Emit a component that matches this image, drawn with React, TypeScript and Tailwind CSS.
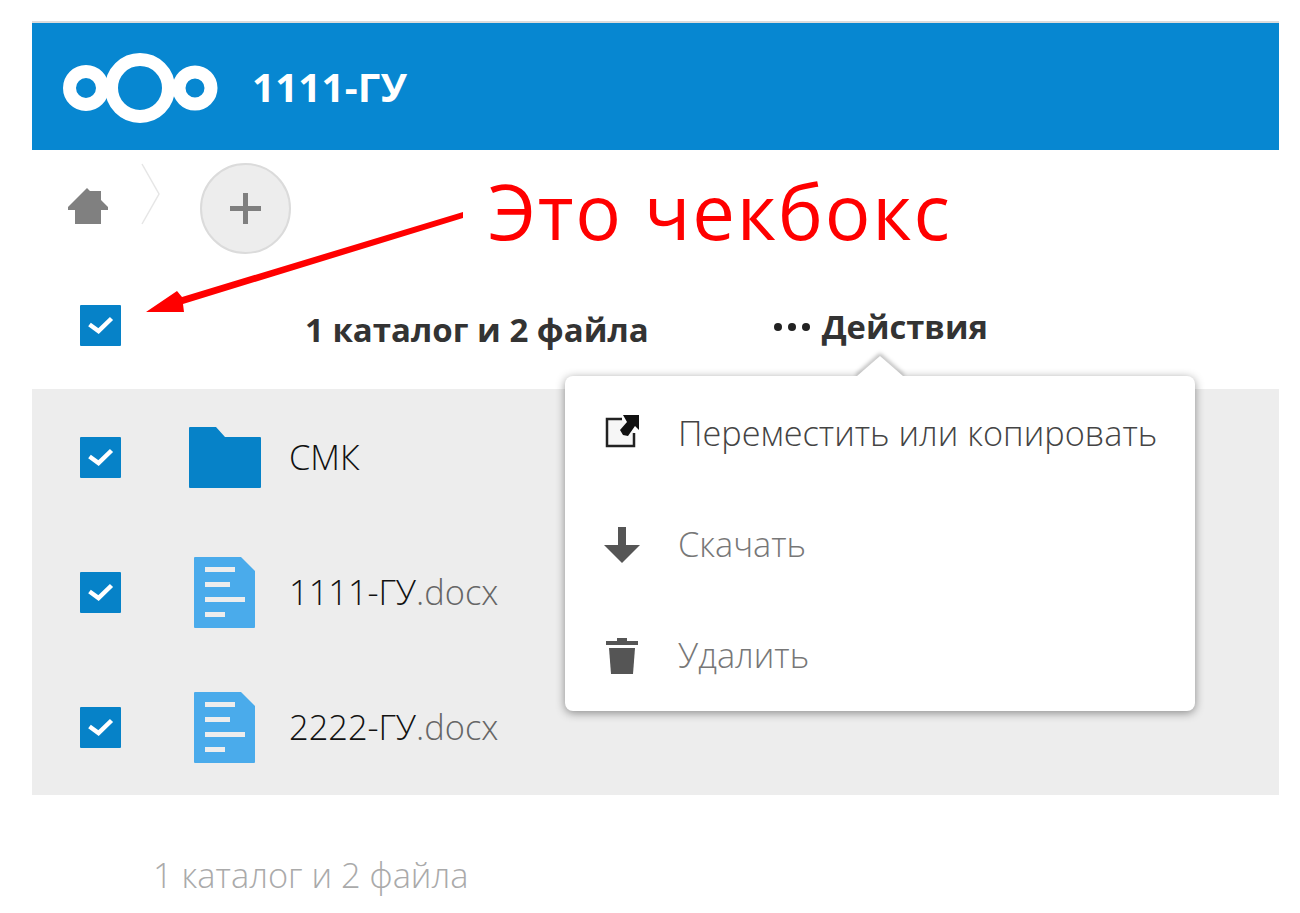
import React from "react";

const fontStack = { fontFamily: '"Open Sans", "Noto Sans", sans-serif' };

function Logo() {
  return (
    <svg width="156" height="76" viewBox="0 0 156 76" className="ml-[1px] mt-[2px] shrink-0">
      <circle cx="23" cy="38" r="16.5" fill="none" stroke="#fff" strokeWidth="13" />
      <circle cx="77" cy="38" r="28.5" fill="none" stroke="#fff" strokeWidth="13" />
      <circle cx="132" cy="38" r="16" fill="none" stroke="#fff" strokeWidth="13" />
    </svg>
  );
}

function Check() {
  return (
    <div className="h-[41px] w-[41px] shrink-0 rounded-[1px] bg-[#0682c8]">
      <svg width="41" height="41" viewBox="0 0 41 41">
        <path d="M9.5 19.5 L18.5 26 L31.5 13.5" fill="none" stroke="#fff" strokeWidth="4.5" />
      </svg>
    </div>
  );
}

function FolderIcon() {
  return (
    <svg width="72" height="61" viewBox="0 0 72 61" className="shrink-0">
      <path d="M0 1 Q0 0 1 0 H27 L36 10 H71 Q72 10 72 11 V60 Q72 61 71 61 H1 Q0 61 0 60 Z" fill="#0682c8" />
    </svg>
  );
}

function DocIcon() {
  return (
    <svg width="61" height="71" viewBox="0 0 61 71" className="-ml-[2px] shrink-0">
      <path d="M0 1 Q0 0 1 0 H47 L61 14 V70 Q61 71 60 71 H1 Q0 71 0 70 Z" fill="#4aabeb" />
      <rect x="11" y="10" width="30" height="5" fill="#ededed" />
      <rect x="11" y="25" width="25" height="5" fill="#ededed" />
      <rect x="11" y="40" width="40" height="5" fill="#ededed" />
      <rect x="11" y="55" width="20" height="5" fill="#ededed" />
    </svg>
  );
}

function FileRow({ name, ext, folder }: { name: string; ext?: string; folder?: boolean }) {
  return (
    <div className="flex h-[135px] items-center pl-[48px] last:h-[134px]">
      <Check />
      <div className="flex w-[168px] shrink-0 justify-center pl-[40px]">
        {folder ? <FolderIcon /> : <DocIcon />}
      </div>
      <span className="text-[34.4px] font-light leading-none text-[#111]">
        {name}
        {ext && <span className="text-[#666]">{ext}</span>}
      </span>
    </div>
  );
}

function MenuItem({ icon, label, color }: { icon: React.ReactNode; label: string; color: string }) {
  return (
    <div className="flex h-[111px] items-center pl-[38px]">
      <div className="flex w-[38px] shrink-0 justify-center">{icon}</div>
      <span className={`ml-[37px] text-[34.3px] font-light leading-none ${color}`}>{label}</span>
    </div>
  );
}

export default function App() {
  return (
    <div className="relative h-[913px] w-[1300px] overflow-hidden bg-white" style={fontStack}>
      <div className="ml-[32px] mr-[21px] pt-[21px]">
        <div className="h-[2px] bg-[#dcdcdc]" />
        {/* Header */}
        <div className="flex h-[127px] items-center bg-[#0787d1] pl-[30px]">
          <Logo />
          <span className="ml-[33px] text-[40px] font-bold leading-none tracking-[0.3px] text-white">1111-ГУ</span>
        </div>

        {/* Breadcrumbs */}
        <div className="flex h-[135px] items-start pl-[36px] pt-[13px]">
          <svg width="40" height="36" viewBox="0 0 40 36" className="mt-[25px] shrink-0">
            <path d="M19 0 L22 3 H33 V12 L40 19 V22 H33 V36 H7 V22 H0 V19 Z" fill="#808080" />
          </svg>
          <svg width="20" height="62" viewBox="0 0 20 62" className="ml-[33px] shrink-0">
            <path d="M1 1 L18 31 L1 61" fill="none" stroke="#e6e6e6" strokeWidth="1.5" />
          </svg>
          <div className="ml-[39px] flex h-[91px] w-[91px] items-center justify-center rounded-full border-2 border-[#dbdbdb] bg-[#ededed]">
            <svg width="31" height="31" viewBox="0 0 31 31">
              <path d="M13 0 H18 V13 H31 V18 H18 V31 H13 V18 H0 V13 H13 Z" fill="#7f7f7f" />
            </svg>
          </div>
        </div>

        {/* Table header */}
        <div className="flex h-[104px] items-center pl-[48px] pb-[16px]">
          <div className="-mt-[7px]">
            <Check />
          </div>
          <span className="ml-[184px] text-[33px] font-bold leading-none text-[#333]">1 каталог и 2 файла</span>
          <span className="ml-[125px] -mt-[4px] flex items-center text-[32.7px] font-bold leading-none text-[#333]">
            <span className="mr-[12px] flex gap-[6px]">
              <span className="h-[8px] w-[8px] rounded-full bg-[#222]" />
              <span className="h-[8px] w-[8px] rounded-full bg-[#222]" />
              <span className="h-[8px] w-[8px] rounded-full bg-[#222]" />
            </span>
            Действия
          </span>
        </div>

        {/* Rows */}
        <div className="h-[406px] bg-[#ededed] pt-[1px]">
          <FileRow name="СМК" folder />
          <FileRow name="1111-ГУ" ext=".docx" />
          <FileRow name="2222-ГУ" ext=".docx" />
        </div>

        {/* Summary */}
        <div className="pl-[121px] pt-[63px] text-[34.4px] font-light leading-none text-[#aaa]">1 каталог и 2 файла</div>
      </div>

      {/* Actions menu */}
      <div className="absolute left-[565px] top-[376px] h-[335px] w-[630px] rounded-[8px] bg-white py-[2px] shadow-[0_2px_10px_rgba(0,0,0,0.42)]">
        <svg width="60" height="30" viewBox="0 0 60 30" className="absolute left-[285px] top-[-30px]">
          <path d="M7 30 L30 10 L53 30" fill="none" stroke="#000" strokeOpacity="0.3" strokeWidth="4" className="blur-[2px]" />
          <path d="M7 30 L30 10 L53 30 Z" fill="#fff" />
        </svg>
        <MenuItem
          color="text-[#444]"
          label="Переместить или копировать"
          icon={
            <svg width="36" height="34" viewBox="0 0 36 34" className="mb-[4px]">
              <path d="M18 4 H3 V31 H30 V18" fill="#f6f6f6" stroke="#222" strokeWidth="2.5" />
              <path d="M19 0 H35 V15 L31 11 L24 21 L19 20 L16 15 L23 7 Z" fill="#111" />
            </svg>
          }
        />
        <MenuItem
          color="text-[#777]"
          label="Скачать"
          icon={
            <svg width="36" height="36" viewBox="0 0 36 36">
              <path d="M14 0 H22 V18 H36 L18 36 L0 18 H14 Z" fill="#555" />
            </svg>
          }
        />
        <MenuItem
          color="text-[#777]"
          label="Удалить"
          icon={
            <svg width="32" height="36" viewBox="0 0 32 36">
              <path d="M0 3 H11 V0 H21 V3 H32 V7 H0 Z" fill="#555" />
              <path d="M3 10 H29 L27 36 H5 Z" fill="#555" />
            </svg>
          }
        />
      </div>

      {/* Annotation over the screenshot */}
      <svg width="340" height="120" viewBox="0 0 340 120" className="absolute left-[140px] top-[205px]">
        <path d="M323 7 L323 13 L43 99 L44 107 L6 107 L37 86 L42 92 Z" fill="#ff0000" />
      </svg>
      <span className="absolute left-[488px] top-[161px] text-[76px] leading-[100px] tracking-[1.8px] text-[#ff0000]">Это чекбокс</span>
    </div>
  );
}
